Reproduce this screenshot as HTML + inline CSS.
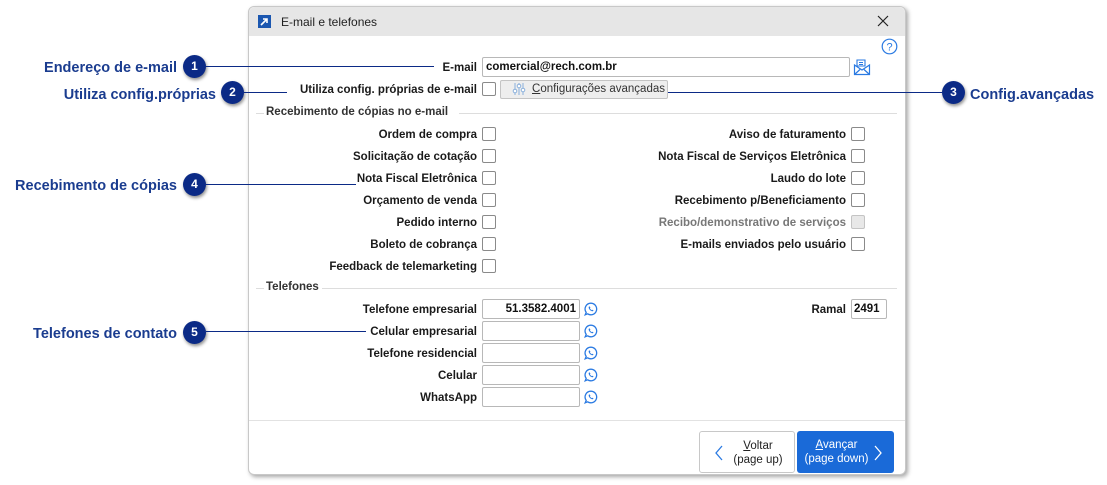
<!DOCTYPE html>
<html><head><meta charset="utf-8"><style>
*{margin:0;padding:0;box-sizing:border-box}
body{width:1107px;height:485px;background:#fff;position:relative;overflow:hidden;font-family:"Liberation Sans",sans-serif}
.dlg{position:absolute;left:248px;top:6px;width:658px;height:469px;border:1px solid #c8c8c8;border-radius:6px;background:#fff;box-shadow:2px 2px 4px rgba(0,0,0,.35)}
.tb{position:absolute;left:0;top:0;width:656px;height:29px;background:#e6e6e6;border-radius:6px 6px 0 0}
.a{position:absolute}
.lbl{position:absolute;font-size:11.5px;font-weight:bold;color:#1a1a1a;text-align:right;white-space:nowrap;margin-top:2px}
.lg{color:#777}
.cb{position:absolute;width:14px;height:14px;border:1px solid #8a8a8a;border-radius:2px;background:#fff}
.inp{position:absolute;border:1px solid #b8b8b8;border-radius:2px;background:#fff;height:20px;font-size:11.5px;font-weight:bold;color:#111;line-height:18px;padding:0 3px}
.sec{position:absolute;font-size:11.5px;font-weight:bold;color:#333}
.hl{position:absolute;height:1px;background:#ddd}
.co{position:absolute;font-size:14.5px;font-weight:bold;color:#1a3c8f;white-space:nowrap;margin-top:3px}
.num{position:absolute;width:23px;height:23px;border-radius:50%;background:#0b2a86;color:#fff;font-size:12px;font-weight:bold;text-align:center;line-height:23px;box-shadow:1px 2px 3px rgba(0,0,0,.45)}
.ln{position:absolute;height:1px;background:#0b2a86}
.wa{position:absolute;width:14px;height:14px}
</style></head><body>
<div class="dlg">
<div class="tb"></div>
<div class="a" style="left:9px;top:8px;width:13px;height:13px;background:#1b57b0"></div>
<svg class="a" style="left:9px;top:8px" width="13" height="13"><path d="M3 10 L9 4 M5 4 H9 V8" stroke="#fff" stroke-width="1.6" fill="none"/></svg>
<div class="a" style="left:32px;top:8px;font-size:12px;color:#222">E-mail e telefones</div>
<svg class="a" style="left:628px;top:8px" width="12" height="12"><path d="M1 1L11 11M11 1L1 11" stroke="#222" stroke-width="1.2"/></svg>
<svg class="a" style="left:632px;top:31px" width="17" height="17"><circle cx="8.5" cy="8.5" r="7.3" stroke="#2a7ae2" stroke-width="1.2" fill="none"/><text x="8.5" y="12.5" font-size="11" text-anchor="middle" fill="#2a7ae2" font-family="Liberation Sans">?</text></svg>
<div class="hl" style="left:0;top:413px;width:656px;background:#e2e2e2"></div>
</div>

<div class="lbl" style="right:630px;top:60px">E-mail</div>
<div class="inp" style="left:482px;top:57px;width:368px">comercial@rech.com.br</div>
<svg class="a" style="left:853px;top:58px" width="18" height="18"><path d="M4 2H12V8H4Z M6 4.5H10 M6 6.5H10" stroke="#2a7ae2" fill="none" stroke-width="1.1"/><path d="M1.5 7L9 12L16.5 7V16.5H1.5Z M1.5 16.5L7 11.5 M16.5 16.5L11 11.5" stroke="#2a7ae2" fill="none" stroke-width="1.2"/></svg>
<div class="lbl" style="right:630px;top:82px">Utiliza config. próprias de e-mail</div>
<div class="cb" style="left:482px;top:82px"></div>
<div class="a" style="left:500px;top:80px;width:168px;height:19px;border:1px solid #c4c4c4;border-radius:2px;background:#eee;font-size:11.5px;color:#333;line-height:17px;padding-left:31px"><u>C</u>onfigurações avançadas</div>
<svg class="a" style="left:512px;top:82px" width="14" height="14"><path d="M3 1V13M7 1V13M11 1V13" stroke="#8ab0dc" stroke-width="1"/><circle cx="3" cy="9" r="1.8" fill="#fff" stroke="#8ab0dc"/><circle cx="7" cy="4" r="1.8" fill="#fff" stroke="#8ab0dc"/><circle cx="11" cy="8" r="1.8" fill="#fff" stroke="#8ab0dc"/></svg>

<div class="sec" style="left:266px;top:106px">Recebimento de cópias no e-mail</div>
<div class="hl" style="left:256px;top:113px;width:8px"></div>
<div class="hl" style="left:459px;top:113px;width:438px"></div>

<div class="lbl" style="right:630px;top:127px">Ordem de compra</div><div class="cb" style="left:482px;top:127px"></div>
<div class="lbl" style="right:630px;top:149px">Solicitação de cotação</div><div class="cb" style="left:482px;top:149px"></div>
<div class="lbl" style="right:630px;top:171px">Nota Fiscal Eletrônica</div><div class="cb" style="left:482px;top:171px"></div>
<div class="lbl" style="right:630px;top:193px">Orçamento de venda</div><div class="cb" style="left:482px;top:193px"></div>
<div class="lbl" style="right:630px;top:215px">Pedido interno</div><div class="cb" style="left:482px;top:215px"></div>
<div class="lbl" style="right:630px;top:237px">Boleto de cobrança</div><div class="cb" style="left:482px;top:237px"></div>
<div class="lbl" style="right:630px;top:259px">Feedback de telemarketing</div><div class="cb" style="left:482px;top:259px"></div>

<div class="lbl" style="right:261px;top:127px">Aviso de faturamento</div><div class="cb" style="left:851px;top:127px"></div>
<div class="lbl" style="right:261px;top:149px">Nota Fiscal de Serviços Eletrônica</div><div class="cb" style="left:851px;top:149px"></div>
<div class="lbl" style="right:261px;top:171px">Laudo do lote</div><div class="cb" style="left:851px;top:171px"></div>
<div class="lbl" style="right:261px;top:193px">Recebimento p/Beneficiamento</div><div class="cb" style="left:851px;top:193px"></div>
<div class="lbl lg" style="right:261px;top:215px">Recibo/demonstrativo de serviços</div><div class="cb" style="left:851px;top:215px;background:#e8e8e8;border-color:#c4c4c4"></div>
<div class="lbl" style="right:261px;top:237px">E-mails enviados pelo usuário</div><div class="cb" style="left:851px;top:237px"></div>

<div class="sec" style="left:266px;top:281px">Telefones</div>
<div class="hl" style="left:256px;top:288px;width:8px"></div>
<div class="hl" style="left:322px;top:288px;width:575px"></div>

<div class="lbl" style="right:630px;top:302px">Telefone empresarial</div>
<div class="inp" style="left:482px;top:299px;width:98px;text-align:right">51.3582.4001</div>
<div class="lbl" style="right:630px;top:324px">Celular empresarial</div><div class="inp" style="left:482px;top:321px;width:98px"></div>
<div class="lbl" style="right:630px;top:346px">Telefone residencial</div><div class="inp" style="left:482px;top:343px;width:98px"></div>
<div class="lbl" style="right:630px;top:368px">Celular</div><div class="inp" style="left:482px;top:365px;width:98px"></div>
<div class="lbl" style="right:630px;top:390px">WhatsApp</div><div class="inp" style="left:482px;top:387px;width:98px"></div>
<div class="lbl" style="right:261px;top:302px">Ramal</div>
<div class="inp" style="left:851px;top:299px;width:36px;padding:0 2px">2491</div>

<svg width="0" height="0" style="position:absolute"><defs><g id="w"><path d="M7 1.2A5.8 5.8 0 1 1 3.6 11.8L1.2 12.8L2.2 10.4A5.8 5.8 0 0 1 7 1.2Z" fill="none" stroke="#2a7ae2" stroke-width="1.3"/><path d="M5 4.5C4.5 5 4.5 6 5.3 7.3C6.3 8.7 7.5 9.3 8.5 9.3C9.2 9.2 9.5 8.6 9.4 8.3L8.3 7.7L7.8 8.2C7 7.8 6.3 7.1 5.9 6.3L6.4 5.8L5.8 4.5Z" fill="#2a7ae2"/></g></defs></svg>
<svg class="wa" style="left:584px;top:302px"><use href="#w"/></svg>
<svg class="wa" style="left:584px;top:324px"><use href="#w"/></svg>
<svg class="wa" style="left:584px;top:346px"><use href="#w"/></svg>
<svg class="wa" style="left:584px;top:368px"><use href="#w"/></svg>
<svg class="wa" style="left:584px;top:390px"><use href="#w"/></svg>

<div class="a" style="left:699px;top:431px;width:96px;height:42px;border:1px solid #c8c8c8;border-radius:3px;background:#fff;font-size:11.5px;color:#222;text-align:center;line-height:14px;padding:7px 0 0 22px"><u>V</u>oltar<br>(page up)</div>
<svg class="a" style="left:714px;top:445px" width="10" height="16"><path d="M8 1L2 8L8 15" stroke="#2a7ae2" stroke-width="1.3" fill="none"/></svg>
<div class="a" style="left:797px;top:431px;width:97px;height:42px;border-radius:3px;background:#1a6ad8;font-size:11.5px;color:#fff;text-align:center;line-height:14px;padding:7px 18px 0 0"><u>A</u>vançar<br>(page down)</div>
<svg class="a" style="left:873px;top:445px" width="10" height="16"><path d="M2 1L8 8L2 15" stroke="#fff" stroke-width="1.3" fill="none"/></svg>

<div class="co" style="right:930px;top:57px">Endereço de e-mail</div>
<div class="num" style="left:183px;top:55px">1</div>
<div class="ln" style="left:206px;top:66px;width:228px"></div>
<div class="co" style="right:891px;top:84px">Utiliza config.próprias</div>
<div class="num" style="left:221px;top:81px">2</div>
<div class="ln" style="left:244px;top:92px;width:43px"></div>
<div class="num" style="left:942px;top:81px">3</div>
<div class="co" style="left:970px;top:84px">Config.avançadas</div>
<div class="ln" style="left:668px;top:92px;width:274px"></div>
<div class="co" style="right:930px;top:175px">Recebimento de cópias</div>
<div class="num" style="left:183px;top:173px">4</div>
<div class="ln" style="left:206px;top:184px;width:150px"></div>
<div class="co" style="right:930px;top:323px">Telefones de contato</div>
<div class="num" style="left:183px;top:321px">5</div>
<div class="ln" style="left:206px;top:331px;width:160px"></div>
</body></html>
